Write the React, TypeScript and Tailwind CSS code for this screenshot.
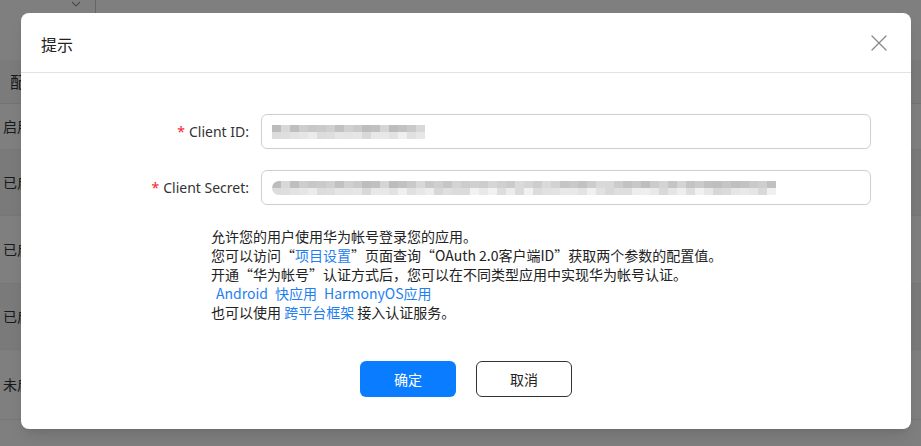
import { X } from 'lucide-react'

const font = { fontFamily: '"Noto Sans", "Noto Sans CJK SC", sans-serif' }
const cjk = { fontFamily: '"Noto Sans CJK SC", "Noto Sans", sans-serif' }

// pseudo-random grey for the pixelated (mosaic) secrets
function shade(i: number, row: number) {
  const n = Math.abs(Math.sin(i * 12.9898 + row * 78.233) * 43758.5453) % 1
  const base = row === 0 ? 188 : 215
  const v = Math.round(base + n * (row === 0 ? 30 : 28))
  return `rgb(${v},${v},${v})`
}

function Mosaic({ cells, rounded }: { cells: number; rounded?: boolean }) {
  return (
    <div className={'flex flex-col overflow-hidden ' + (rounded ? 'rounded-l-full' : '')}>
      {[0, 1].map((row) => (
        <div key={row} className="flex">
          {Array.from({ length: cells }).map((_, i) => (
            <div key={i} className="w-[9px] h-[7px]" style={{ backgroundColor: shade(i, row) }} />
          ))}
        </div>
      ))}
    </div>
  )
}

function Field({ label, cells, rounded }: { label: string; cells: number; rounded?: boolean }) {
  return (
    <div className="flex items-center">
      <label className="w-[240px] pr-[12px] text-right text-[14px] text-[#333]">
        <span className="text-[#f5222d] mr-[4px]">*</span>
        {label}
      </label>
      <div className="w-[610px] h-[35px] border border-[#cfcfcf] rounded-[6px] flex items-center px-[10px]">
        <Mosaic cells={cells} rounded={rounded} />
      </div>
    </div>
  )
}

export default function App() {
  const rows = [
    { h: 'h-[46px]', t: '启用' },
    { h: 'h-[66px]', t: '已启用' },
    { h: 'h-[68px]', t: '已启用' },
    { h: 'h-[66px]', t: '已启用' },
    { h: 'h-[70px]', t: '未启用' },
  ]

  return (
    <div className="relative w-[921px] h-[446px] overflow-hidden bg-white" style={font}>
      {/* page behind the dialog */}
      <div className="flex flex-col text-[14px] text-[#333]">
        <div className="h-[13px] flex">
          <div className="w-[96px] h-full border-r border-[#ccc] flex justify-end items-start pr-[14px]">
            <svg width="10" height="6" viewBox="0 0 10 6" className="mt-[1px]">
              <path d="M1 1l4 4 4-4" fill="none" stroke="#999" strokeWidth="1.2" />
            </svg>
          </div>
        </div>
        <div className="h-[47px]" />
        <div className="h-[44px] bg-[#f7f7f7] border-b border-[#e6e6e6] flex items-center pl-[10px] text-[16px]">
          配置状态
        </div>
        {rows.map((r, i) => (
          <div key={i} className={r.h + ' border-b border-[#eee] flex items-center pl-[3px] ' + (i % 2 ? 'bg-[#f5f5f5]' : 'bg-white')}>
            {r.t}
          </div>
        ))}
      </div>

      {/* overlay */}
      <div className="absolute inset-0 bg-black/50">
        <div className="ml-[21px] mt-[13px] w-[890px] h-[416px] bg-white rounded-[8px] shadow-lg flex flex-col">
          <div className="h-[60px] border-b border-[#e3e3e3] flex items-center justify-between pl-[20px] pr-[18px]">
            <span className="text-[16px] text-[#222] pt-[2px]" style={cjk}>提示</span>
            <X className="w-[28px] h-[28px] text-[#888]" strokeWidth={1.1} />
          </div>

          <div className="pt-[41px] flex flex-col gap-[21px]">
            <Field label="Client ID:" cells={17} />
            <Field label="Client Secret:" cells={56} rounded />
          </div>

          <div className="pl-[190px] pt-[22px] text-[14px] leading-[19px] text-[#222]" style={cjk}>
            <p>允许您的用户使用华为帐号登录您的应用。</p>
            <p>
              您可以访问“<span className="text-[#1f7fef]">项目设置</span>”页面查询“OAuth 2.0客户端ID”获取两个参数的配置值。
            </p>
            <p>开通“华为帐号”认证方式后，您可以在不同类型应用中实现华为帐号认证。</p>
            <p className="text-[#1f7fef] pl-[5px] flex gap-[7px]">
              <span>Android</span>
              <span>快应用</span>
              <span>HarmonyOS应用</span>
            </p>
            <p>
              也可以使用 <span className="text-[#1f7fef]">跨平台框架</span> 接入认证服务。
            </p>
          </div>

          <div className="mt-auto pb-[32px] flex justify-center gap-[20px]">
            <button className="w-[96px] h-[36px] rounded-[6px] bg-[#0a7cff] text-white text-[14px]" style={cjk}>确定</button>
            <button className="w-[96px] h-[36px] rounded-[6px] border border-[#333] text-[#222] text-[14px]" style={cjk}>取消</button>
          </div>
        </div>
      </div>
    </div>
  )
}
